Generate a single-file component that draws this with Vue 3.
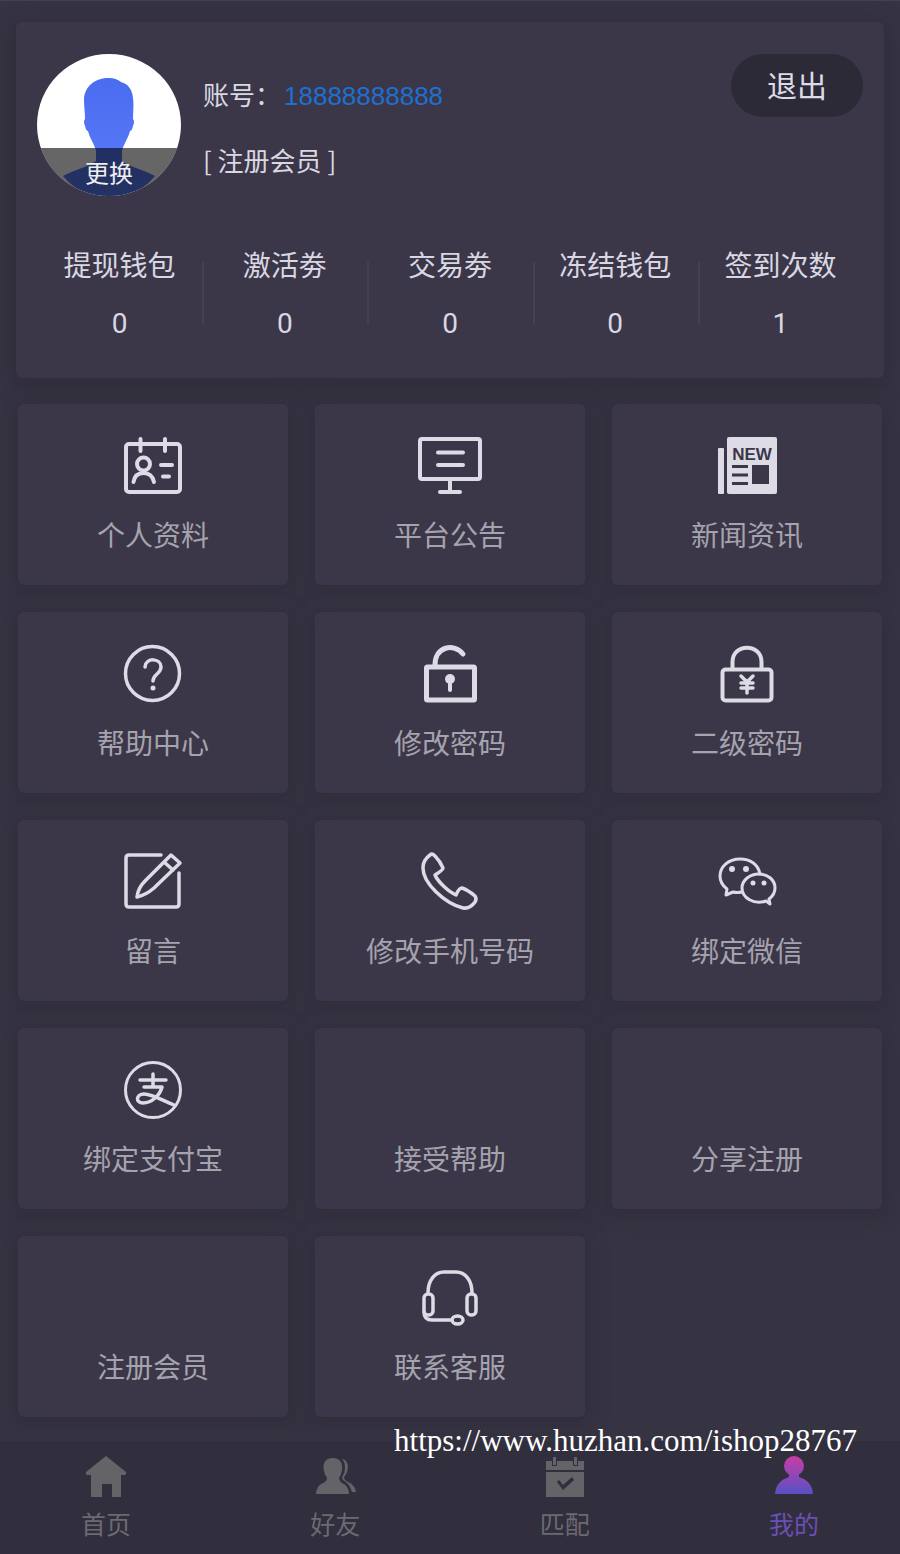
<template>
  <div class="app">
    <main>
      <section class="profile">
        <div class="user">
          <div class="avatar">
            <svg viewBox="0 0 144 144" aria-hidden="true">
              <defs>
                <linearGradient id="skin" x1="0" y1="0" x2="0" y2="1">
                  <stop offset="0" stop-color="#4a6cf0" />
                  <stop offset="1" stop-color="#5b7cf8" />
                </linearGradient>
              </defs>
              <path fill="url(#skin)" d="M72 24C58 24 48 32 47 45C47 52 48 59 48 65Q46 67 48 72Q49 77 51 77C53 85 58 91 59 97V107C52 113 36 116 26 122Q44 144 72 144Q100 144 118 122C108 116 92 113 85 107V97C86 91 91 85 93 77Q95 77 96 72Q98 67 96 65C96 58 97 52 96 44C95 35 91 30 84 28Q79 24 72 24Z" />
            </svg>
            <button type="button" class="change">更换</button>
          </div>
          <div class="info">
            <p>账号：<span class="phone">18888888888</span></p>
            <p>[ 注册会员 ]</p>
          </div>
          <button type="button" class="logout">退出</button>
        </div>

        <dl class="stats">
          <div v-for="s in stats" :key="s.label" class="stat">
            <dt>{{ s.label }}</dt>
            <dd>{{ s.value }}</dd>
          </div>
        </dl>
      </section>

      <nav class="grid">
        <a v-for="m in menus" :key="m.label" href="#" class="tile">
          <svg class="icon" viewBox="0 0 64 64" aria-hidden="true">
            <g v-if="m.icon === 'profile'" stroke-width="4">
              <rect x="5" y="10" width="54" height="48" rx="3" />
              <path d="M19.5 5V17M44 5V17M40 31H51M42 42.5H48" />
              <circle cx="22.5" cy="30" r="6.5" />
              <path d="M12.5 48Q14 39 22.5 39Q31 39 33 48" />
            </g>
            <g v-else-if="m.icon === 'notice'" stroke-width="4">
              <rect x="2" y="5" width="60" height="40" rx="2" />
              <path d="M20 18.5H45M20 31H45M32 46V57M22 58H42" />
            </g>
            <g v-else-if="m.icon === 'news'" class="solid">
              <rect x="3" y="14" width="6" height="46" rx="1" />
              <rect x="12" y="3" width="50" height="57" rx="2" />
              <text x="37" y="26" text-anchor="middle">NEW</text>
              <path class="cut" d="M17 31H33V34H17ZM17 39.5H33V42.5H17ZM17 48H33V51H17ZM37 31H54V50H37Z" />
            </g>
            <g v-else-if="m.icon === 'help'" stroke-width="3.5">
              <circle cx="31.5" cy="31.5" r="27" />
              <path d="M24 25C25 15 40 16 40 25C40 32 32 32 32 39" />
              <circle class="dot" cx="32" cy="46" r="2.5" />
            </g>
            <g v-else-if="m.icon === 'unlock'" stroke-width="5">
              <rect x="8.5" y="25" width="48" height="33" rx="1" />
              <path d="M17 23C17 4 36 1 45 12" />
              <circle class="dot" cx="32" cy="37" r="5" />
              <path stroke-width="4" d="M32 38V48" />
            </g>
            <g v-else-if="m.icon === 'lock'" stroke-width="4">
              <rect x="7.5" y="27.5" width="49" height="31" rx="3" />
              <path d="M17.5 27V20C17.5 1 46.5 1 46.5 20V27" />
              <path stroke-width="3.5" d="M26 34L32 40L38 34M32 40V51M26 41H38M26 46H38" />
            </g>
            <g v-else-if="m.icon === 'message'" stroke-width="3.5">
              <path d="M40 5H8Q5 5 5 8V54Q5 57 8 57H55Q58 57 58 54V23" />
              <path d="M50 5L59 13L33 38Q25 45 16 47Q17 38 24 31ZM43 12L52 20" />
            </g>
            <g v-else-if="m.icon === 'phone'" stroke-width="3.5">
              <path d="M12 5Q14 3 17 6Q22 11 25 18Q25 20 17 25C20 32 31 42 38 45Q41 38 44 38Q50 40 57 46Q59 49 57 52Q52 59 45 58C26 53 5 33 5 18Q5 10 12 5Z" />
            </g>
            <g v-else-if="m.icon === 'wechat'" stroke-width="3">
              <path d="M45 24C43 14 35 9 25 9C13 9 5 17 5 26C5 32 8 36 12 39L11 45L18 42Q22 43 27 42" />
              <path d="M51 51C39 55 27 48 27 38C27 30 35 24 44 24C53 24 60 30 60 38C60 43 58 46 54 49L55 54Z" />
              <circle class="dot" cx="17" cy="19" r="3" />
              <circle class="dot" cx="31" cy="19" r="3" />
              <circle class="dot" cx="38" cy="33" r="2.5" />
              <circle class="dot" cx="49" cy="33" r="2.5" />
            </g>
            <g v-else-if="m.icon === 'alipay'" stroke-width="3">
              <circle cx="32" cy="32" r="27.5" />
              <path stroke-width="3.5" d="M19 22H45M32 16V29M23 29H41C39 37 31 45 22 45C14 45 15 36 23 36C31 36 41 42 53 47" />
            </g>
            <g v-else-if="m.icon === 'service'" stroke-width="3.5">
              <path d="M10 27C10 14 17 6 26 6H38C47 6 54 14 54 27" />
              <rect x="6" y="28" width="9" height="21" rx="4" />
              <rect x="49" y="28" width="9" height="21" rx="4" />
              <path d="M6 46Q6 54 14 54H34" />
              <ellipse cx="39.5" cy="54" rx="5.5" ry="4" />
            </g>
          </svg>
          <span>{{ m.label }}</span>
        </a>
      </nav>
    </main>

    <nav class="tabbar">
      <a v-for="t in tabs" :key="t.label" href="#" class="tab" :class="{ active: t.active }">
        <svg viewBox="0 0 44 44" aria-hidden="true">
          <path v-if="t.icon === 'home'" d="M22 1L42 17Q43 19 41 20H37V42H28V29H18V42H7V20H3Q1 19 2 17Z" />
          <g v-else-if="t.icon === 'friends'">
            <path d="M20 3C12 3 9 9 11 16Q12 21 14 23Q14 26 10 28Q3 31 3 39H36Q36 31 29 28Q26 26 26 23Q28 20 29 15C30 8 27 3 20 3Z" />
            <path d="M29 4C35 5 36 11 34 17Q33 20 31 22Q31 25 35 27Q42 30 43 37H39Q37 29 30 25L29 22Q32 18 32 13Q32 7 29 4Z" />
          </g>
          <g v-else-if="t.icon === 'match'">
            <path d="M3 6H9V11H14V6H30V11H35V6H41V15H3ZM10 2H13V10H10ZM31 2H34V10H31Z" />
            <path fill-rule="evenodd" d="M3 17H41V42H3ZM14 27L20 35L31 25L29 22L20 30L16 25Z" />
          </g>
          <g v-else class="me">
            <defs>
              <linearGradient id="me" gradientUnits="userSpaceOnUse" x1="0" y1="2" x2="0" y2="38">
                <stop offset="0" stop-color="#c63da6" />
                <stop offset="1" stop-color="#5b50c4" />
              </linearGradient>
            </defs>
            <circle cx="22" cy="11" r="10" />
            <path d="M3 39Q4 26 17 22V18H27V22Q40 26 41 39Z" />
          </g>
        </svg>
        <span>{{ t.label }}</span>
      </a>
      <p class="site">https://www.huzhan.com/ishop28767</p>
    </nav>
  </div>
</template>

<script setup>
import { ref } from 'vue'

const stats = ref([
  { label: '提现钱包', value: 0 },
  { label: '激活劵', value: 0 },
  { label: '交易劵', value: 0 },
  { label: '冻结钱包', value: 0 },
  { label: '签到次数', value: 1 }
])

// entries without an icon keep the empty icon space
const menus = [
  { label: '个人资料', icon: 'profile' },
  { label: '平台公告', icon: 'notice' },
  { label: '新闻资讯', icon: 'news' },
  { label: '帮助中心', icon: 'help' },
  { label: '修改密码', icon: 'unlock' },
  { label: '二级密码', icon: 'lock' },
  { label: '留言', icon: 'message' },
  { label: '修改手机号码', icon: 'phone' },
  { label: '绑定微信', icon: 'wechat' },
  { label: '绑定支付宝', icon: 'alipay' },
  { label: '接受帮助', icon: '' },
  { label: '分享注册', icon: '' },
  { label: '注册会员', icon: '' },
  { label: '联系客服', icon: 'service' }
]

const tabs = [
  { label: '首页', icon: 'home' },
  { label: '好友', icon: 'friends' },
  { label: '匹配', icon: 'match' },
  { label: '我的', icon: 'me', active: true }
]
</script>

<style>
body { margin: 0; background: #363341; }
</style>

<style scoped>
.app { min-height: 100vh; box-sizing: border-box; display: flex; flex-direction: column; border-top: 1px solid #454250; background: #363342; color: #d9d7e2; font-family: "Noto Sans CJK SC", sans-serif; }
main { flex: 1; padding: 21px 16px 24px; }
p, dl, dd { margin: 0; }
button { padding: 0; border: 0; font-family: inherit; cursor: pointer; }
a { text-decoration: none; }

.profile { padding: 32px 21px 34px; border-radius: 6px; background: #3b3748; box-shadow: 0 4px 18px 4px #302d3b; }
.user { display: flex; align-items: flex-start; gap: 22px; }
.avatar { position: relative; width: 144px; height: 142px; border-radius: 50%; overflow: hidden; background: #fff; }
.avatar svg { display: block; width: 144px; height: 144px; }
.change { position: absolute; left: 0; right: 0; bottom: 0; width: 100%; height: 48px; background: rgba(0, 0, 0, 0.6); color: #eee; font-size: 24px; line-height: 44px; }
.info { flex: 1; padding-top: 8px; font-size: 26px; line-height: 64px; }
.phone { margin-left: 3px; color: #1f6fd0; font-family: "Liberation Sans", sans-serif; }
.logout { width: 132px; height: 63px; padding-bottom: 4px; border-radius: 32px; background: #2d2a38; color: #dddbe6; font-size: 30px; line-height: 56px; }

.stats { display: flex; margin-top: 48px; text-align: center; font-size: 28px; line-height: 40px; }
.stat { position: relative; flex: 1; display: flex; flex-direction: column; gap: 20px; white-space: nowrap; }
.stat dd { font-family: Roboto, sans-serif; }
.stat + .stat::before { content: ""; position: absolute; left: 0; top: 18px; bottom: 20px; width: 2px; background: #454151; }

.grid { display: grid; grid-template-columns: repeat(3, 1fr); gap: 27px; margin: 26px 2px 0; }
.tile { display: flex; flex-direction: column; align-items: center; gap: 16px; padding: 30px 0 31px; border-radius: 6px; background: #3b3748; box-shadow: 0 4px 18px 4px #312e3c; color: #a5a3ae; font-size: 28px; line-height: 40px; }
.icon { width: 64px; height: 64px; fill: none; stroke: #dddbe5; stroke-linecap: round; stroke-linejoin: round; }
.icon .dot { fill: #dddbe5; stroke: none; }
.icon .solid { fill: #dddbe5; stroke: none; }
.icon .solid .cut, .icon text { fill: #3b3748; }
.icon text { font: bold 17px "Liberation Sans", sans-serif; }

.tabbar { position: relative; display: flex; justify-content: space-between; padding: 14px 80px; background: #312e3d; }
.tab { display: flex; flex-direction: column; align-items: center; gap: 6px; width: 52px; color: #6c6a71; font-size: 25px; line-height: 36px; white-space: nowrap; }
.tab svg { width: 44px; height: 44px; fill: #646367; }
.tab .me { fill: url(#me); }
.tab.active { color: #6a4fb5; }
.site { position: absolute; right: 43px; top: -18px; color: #fff; font-family: "Liberation Serif", serif; font-size: 31px; line-height: 36px; }
</style>
